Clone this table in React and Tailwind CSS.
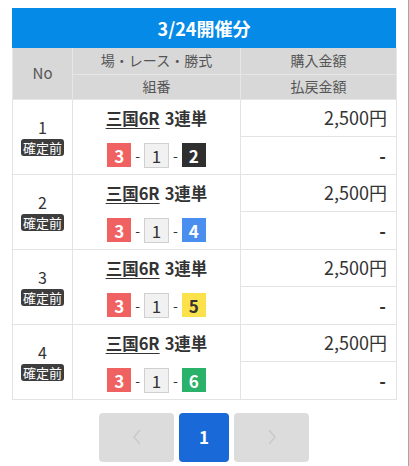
import React from "react";

const rows = [
  { no: 1, third: "2", cls: "bg-[#2f2f2f] text-white" },
  { no: 2, third: "4", cls: "bg-[#4a8ff0] text-white" },
  { no: 3, third: "5", cls: "bg-[#fbe14b] text-[#333]" },
  { no: 4, third: "6", cls: "bg-[#2bb26a] text-white" },
];

function Box({ children, cls }) {
  return (
    <span className={`inline-flex h-[24px] w-[24px] items-center justify-center text-[17px] font-bold leading-none ${cls}`}>
      {children}
    </span>
  );
}

function Dash() {
  return <span className="mx-[4px] text-[14px] leading-none text-[#333]">-</span>;
}

export default function App() {
  return (
    <div
      className="h-[466px] w-[409px] border-r border-[#a5a5a5] bg-white pl-[12px] pt-[8px]"
      style={{ fontFamily: '"Noto Sans CJK JP", "Noto Sans", sans-serif' }}
    >
      <div className="w-[384px]">
        <div className="flex h-[40px] items-center justify-center bg-[#058ae8] text-[18px] font-bold text-white">
          3/24開催分
        </div>
        <table className="w-[384px] table-fixed border-collapse text-[#333]">
          <colgroup>
            <col className="w-[60px]" />
            <col className="w-[168px]" />
            <col className="w-[156px]" />
          </colgroup>
          <thead className="bg-[#d8d8d8] text-[14px] font-normal text-[#555]">
            <tr className="h-[26px]">
              <th rowSpan={2} className="border border-[#e6e6e6] border-t-0 text-[15px] font-normal">No</th>
              <th className="border border-[#e6e6e6] border-t-0 font-normal">場・レース・勝式</th>
              <th className="border border-[#e6e6e6] border-t-0 font-normal">購入金額</th>
            </tr>
            <tr className="h-[25px]">
              <th className="border border-[#e6e6e6] font-normal">組番</th>
              <th className="border border-[#e6e6e6] font-normal">払戻金額</th>
            </tr>
          </thead>
          <tbody>
            {rows.map((r) => (
              <React.Fragment key={r.no}>
                <tr className="h-[37px]">
                  <td rowSpan={2} className="border border-[#e3e3e3] text-center align-middle">
                    <div className="flex flex-col items-center">
                      <span className="text-[16px] leading-[20px]">{r.no}</span>
                      <span className="mt-[2px] rounded-[3px] bg-[#3d3d3d] px-[2px] text-[13px] leading-[17px] text-white">
                        確定前
                      </span>
                    </div>
                  </td>
                  <td rowSpan={2} className="border border-[#e3e3e3] p-0 align-top">
                    <div className="flex h-[74px] flex-col">
                      <div className="flex h-[37px] items-center justify-center text-[16.5px] font-bold">
                        <span className="underline underline-offset-[3px] decoration-[1px]">三国6R</span>
                        <span className="ml-[5px]">3連単</span>
                      </div>
                      <div className="flex h-[37px] items-center justify-center">
                        <Box cls="bg-[#f06262] text-white">3</Box>
                        <Dash />
                        <span className="inline-flex h-[25px] w-[25px] items-center justify-center border border-[#d0d0d0] bg-[#f1f1f1] text-[17px] leading-none text-[#333]">
                          1
                        </span>
                        <Dash />
                        <Box cls={r.cls}>{r.third}</Box>
                      </div>
                    </div>
                  </td>
                  <td className="border border-[#e3e3e3] pr-[9px] text-right text-[18px]">2,500円</td>
                </tr>
                <tr className="h-[37px]">
                  <td className="border border-[#e3e3e3] pr-[10px] text-right text-[18px] font-bold">-</td>
                </tr>
              </React.Fragment>
            ))}
          </tbody>
        </table>
        <div className="mt-[13px] flex justify-center gap-[5px]">
          <div className="flex h-[49px] w-[75px] items-center justify-center rounded-[4px] bg-[#dcdcdc]">
            <svg width="12" height="18" viewBox="0 0 12 18" fill="none" stroke="#c9c9c9" strokeWidth="1.5">
              <path d="M9 2 L3 9 L9 16" />
            </svg>
          </div>
          <div className="flex h-[49px] w-[50px] items-center justify-center rounded-[4px] bg-[#1a69d9] text-[17px] font-bold text-white">
            1
          </div>
          <div className="flex h-[49px] w-[75px] items-center justify-center rounded-[4px] bg-[#dcdcdc]">
            <svg width="12" height="18" viewBox="0 0 12 18" fill="none" stroke="#c9c9c9" strokeWidth="1.5">
              <path d="M3 2 L9 9 L3 16" />
            </svg>
          </div>
        </div>
      </div>
    </div>
  );
}
